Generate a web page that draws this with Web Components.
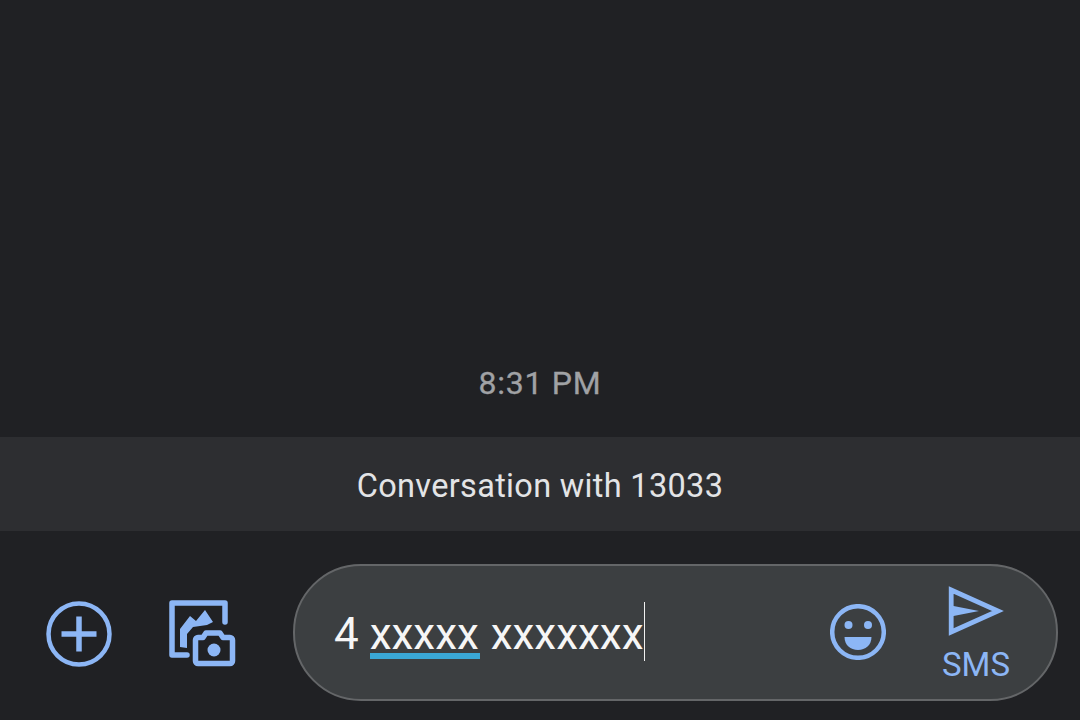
<!DOCTYPE html>
<html><head><meta charset="utf-8"><style>
html,body{margin:0;padding:0;background:#202124;height:720px;overflow:hidden}
body{font-family:Roboto,"Liberation Sans",sans-serif}
</style></head><body>
<msg-app>
  <msg-thread time="8:31 PM"></msg-thread>
  <msg-banner>Conversation with 13033</msg-banner>
  <msg-composer></msg-composer>
</msg-app>
<script>
function def(name,html){customElements.define(name,class extends HTMLElement{constructor(){super();this.attachShadow({mode:'open'}).innerHTML=html;}
connectedCallback(){const t=this.shadowRoot.querySelector('[data-time]');if(t)t.textContent=this.getAttribute('time');}});}
def('msg-app',`<style>:host{display:flex;flex-direction:column;height:720px;background:#202124}</style><slot></slot>`);
def('msg-thread',`<style>:host{display:flex;flex:1;align-items:flex-end;justify-content:center;padding-bottom:35px}
span{font-size:32px;line-height:38px;color:#a0a2a5;letter-spacing:.72px;font-weight:400;-webkit-text-stroke:.3px #a0a2a5}</style><span data-time></span>`);
def('msg-banner',`<style>:host{display:flex;height:94px;padding-top:4px;box-sizing:border-box;align-items:center;justify-content:center;background:#2d2e31;color:#e3e4e6;font-size:32.5px;letter-spacing:.32px}</style><slot></slot>`);
def('icon-add',`<style>:host{display:block;width:68px;height:68px}svg{display:block}</style><svg width="68" height="68" viewBox="0 0 68 68" fill="none" stroke="#8cb6f5" stroke-width="4.5"><circle cx="34" cy="34" r="30.5"/><path d="M34 16.500v35M16.500 34h35" stroke-width="5.500"/></svg>`);
def('icon-media',`<style>:host{display:block;width:68px;height:68px}svg{display:block}</style><svg width="68" height="68" viewBox="0 0 68 68" fill="none"><path d="M18 55H3V3h53v19" stroke="#8cb6f5" stroke-width="5.500" stroke-linejoin="round" stroke-linecap="round"/><path d="M11 47V29L21 16l6 5 9-11 8 12-6 3-14 2-6 7v14z" fill="#8cb6f5"/><path d="M26.500 40a2.500 2.500 0 0 1 2.500-2.500h5l3-4.500h14l3 4.500h7a2.500 2.500 0 0 1 2.500 2.500v21a2.500 2.500 0 0 1-2.500 2.500H29a2.500 2.500 0 0 1-2.500-2.500z" fill="#202124" stroke="#8cb6f5" stroke-width="5.500" stroke-linejoin="round"/><circle cx="45" cy="50" r="6.500" fill="#8cb6f5"/></svg>`);
def('icon-emoji',`<style>:host{display:block;width:56px;height:56px}svg{display:block}</style><svg width="56" height="56" viewBox="0 0 56 56"><circle cx="28" cy="28" r="25.800" fill="none" stroke="#8cb6f5" stroke-width="4.500"/><circle cx="18.500" cy="21" r="4" fill="#8cb6f5"/><circle cx="38" cy="21" r="4" fill="#8cb6f5"/><path d="M14.500 33h27c0 8-6 13-13.500 13s-13.500-5-13.500-13z" fill="#8cb6f5"/></svg>`);
def('icon-send',`<style>:host{display:block;width:56px;height:50px}svg{display:block}</style><svg width="56" height="50" viewBox="0 0 56 50" fill="none"><path d="M3.200 4L50 25 3.200 46z" stroke="#8cb6f5" stroke-width="4.800" stroke-linejoin="miter"/><path d="M3 19.500l28 5.500-28 5.500z" fill="#8cb6f5"/></svg>`);
def('msg-field',`<style>:host{display:flex;align-items:center;box-sizing:border-box;flex:1;height:137px;border:2px solid #646668;border-radius:68px;background:#3c3f41;padding-left:39px;padding-right:46px;color:#f6f6f6;font-size:44px;min-width:0}
.text{flex:1;display:flex;align-items:center;white-space:pre;height:66px;position:relative;top:2px}
u{text-decoration:none;position:relative;margin-right:1px}
u::after{content:"";position:absolute;left:0;right:-1px;bottom:1.500px;height:6px;background:#3aa8d6}
.caret{display:inline-block;width:1px;height:59px;background:#f0f0f0;margin-left:0;position:relative;top:-3px}
.emoji{margin-right:56px;position:relative;top:0}
.send{display:flex;flex-direction:column;align-items:center;width:68px;position:relative;top:2px}
.sms{font-size:33px;line-height:36px;color:#8cb6f5;margin-top:11px}</style>
<div class="text"><span>4 <u>xxxxx</u> xxxxxxx</span><span class="caret"></span></div>
<icon-emoji class="emoji"></icon-emoji>
<div class="send"><icon-send></icon-send><span class="sms">SMS</span></div>`);
def('msg-composer',`<style>:host{display:flex;align-items:center;box-sizing:border-box;height:189px;padding:33px 22px 20px 45px;background:#202124}
icon-add{margin-right:56px;margin-top:4px}icon-media{margin-right:56px;margin-top:4px}</style>
<icon-add></icon-add><icon-media></icon-media><msg-field></msg-field>`);
</script>
</body></html>
